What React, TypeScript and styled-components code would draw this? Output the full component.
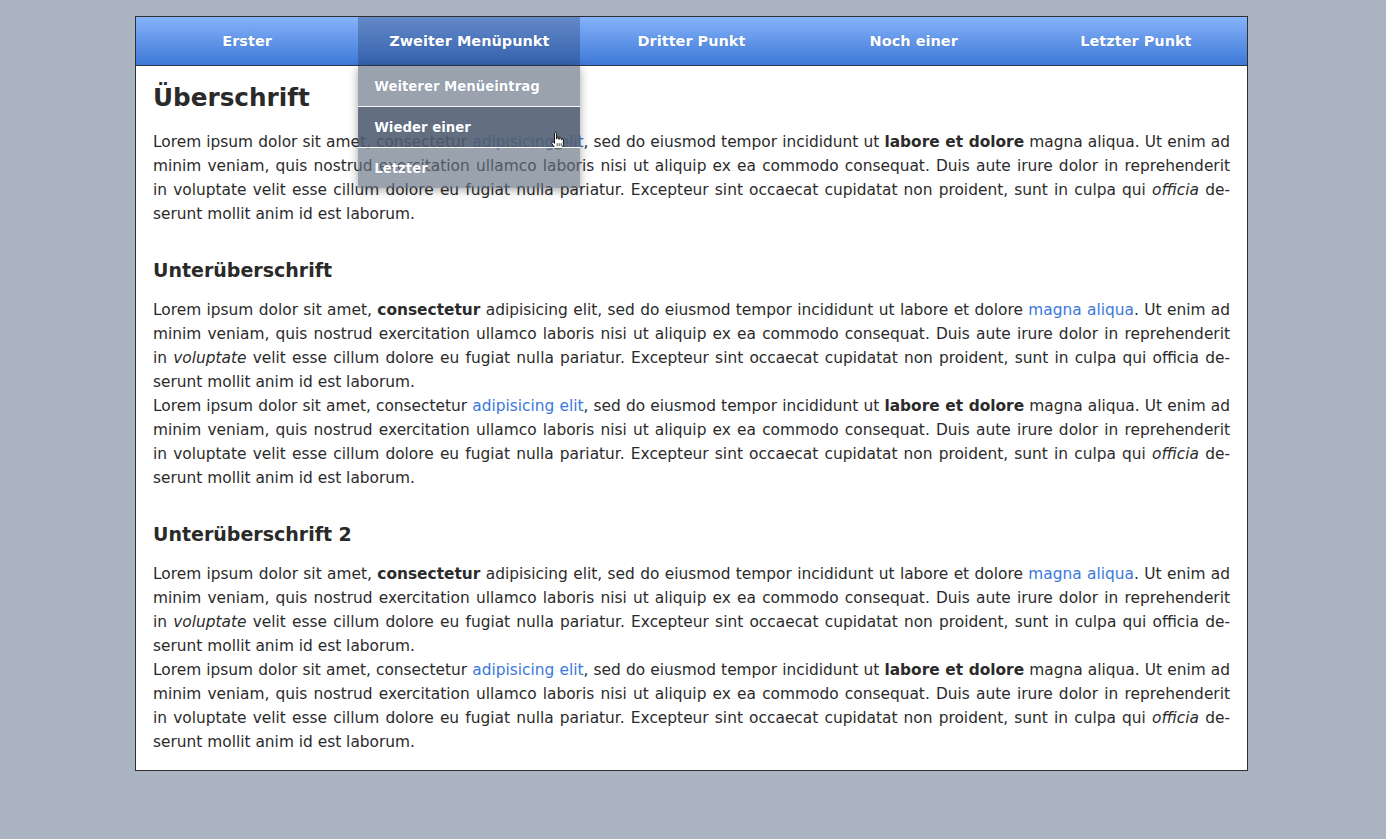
import React from "react";
import styled, { createGlobalStyle } from "styled-components";

const GlobalStyle = createGlobalStyle`
  html, body {
    margin: 0;
    padding: 0;
    background: #aab4c0;
  }
  body {
    font-family: "DejaVu Sans", "Liberation Sans", sans-serif;
    color: #2b2b2b;
  }
`;

const Page = styled.div`
  padding: 16px 3px 40px 0;
`;

const Frame = styled.div`
  width: 1111px;
  margin: 0 auto;
  border: 1px solid #2f2f2f;
  background: #ffffff;
`;

const NavBar = styled.nav`
  position: relative;
  display: flex;
  height: 48px;
  background: linear-gradient(#86b3fb, #3e78d6);
  border-bottom: 1px solid #2f3a4a;
`;

const NavItem = styled.div<{ $active?: boolean }>`
  position: relative;
  flex: 1 1 0;
  display: flex;
  align-items: center;
  justify-content: center;
  font-family: "DejaVu Sans", sans-serif;
  font-weight: bold;
  font-size: 14.5px;
  color: #ffffff;
  text-shadow: 0 0 1px rgba(20, 50, 110, 0.35);
  background: ${(p) => (p.$active ? "linear-gradient(#6489c8, #3461ad)" : "transparent")};
`;

const Dropdown = styled.ul`
  position: absolute;
  top: 49px;
  left: 0;
  right: 0;
  margin: 0;
  padding: 0;
  list-style: none;
  z-index: 5;
  box-shadow: 0 2px 9px rgba(0, 0, 0, 0.35);
`;

const DropItem = styled.li<{ $hover?: boolean; $divider?: boolean }>`
  position: relative;
  height: 40px;
  display: flex;
  align-items: center;
  padding-left: 16px;
  font-family: "DejaVu Sans", sans-serif;
  font-weight: bold;
  font-size: 13.3px;
  color: #ffffff;
  background: ${(p) => (p.$hover ? "rgba(80, 92, 112, 0.89)" : "rgba(100, 112, 130, 0.65)")};
  border-top: ${(p) => (p.$divider ? "1px solid rgba(255,255,255,0.95)" : "none")};
`;

const Cursor = styled.svg`
  position: absolute;
  left: 192px;
  top: 24px;
  width: 15px;
  height: 19px;
`;

const Content = styled.main`
  padding: 16px 17px 16px;
`;

const Title = styled.h1`
  margin: 0 0 16px;
  font-size: 24.7px;
  line-height: 32px;
  font-weight: bold;
  color: #2a2a2a;
`;

const SubTitle = styled.h2`
  margin: 30px 0 14px;
  font-size: 19px;
  line-height: 28px;
  font-weight: bold;
  color: #2a2a2a;
`;

const Para = styled.p`
  margin: 0;
  font-size: 15.4px;
  line-height: 24px;
`;

const Line = styled.span<{ $last?: boolean }>`
  display: block;
  text-align: justify;
  text-align-last: ${(p) => (p.$last ? "left" : "justify")};
`;

const Link = styled.a`
  color: #3a78dc;
  text-decoration: none;
`;

const Strong = styled.strong`
  font-weight: bold;
`;

const Em = styled.em`
  font-style: italic;
`;

const LineTwo = () => (
  <Line>
    minim veniam, quis nostrud exercitation ullamco laboris nisi ut aliquip ex ea commodo consequat. Duis aute irure dolor in reprehenderit
  </Line>
);

const ParaLinked = () => (
  <Para>
    <Line>
      Lorem ipsum dolor sit amet, consectetur <Link href="#">adipisicing elit</Link>, sed do eiusmod tempor incididunt ut{" "}
      <Strong>labore et dolore</Strong> magna aliqua. Ut enim ad
    </Line>
    <LineTwo />
    <Line>
      in voluptate velit esse cillum dolore eu fugiat nulla pariatur. Excepteur sint occaecat cupidatat non proident, sunt in culpa qui{" "}
      <Em>officia</Em> de-
    </Line>
    <Line $last>serunt mollit anim id est laborum.</Line>
  </Para>
);

const ParaBold = () => (
  <Para>
    <Line>
      Lorem ipsum dolor sit amet, <Strong>consectetur</Strong> adipisicing elit, sed do eiusmod tempor incididunt ut labore et dolore{" "}
      <Link href="#">magna aliqua</Link>. Ut enim ad
    </Line>
    <LineTwo />
    <Line>
      in <Em>voluptate</Em> velit esse cillum dolore eu fugiat nulla pariatur. Excepteur sint occaecat cupidatat non proident, sunt in culpa qui officia de-
    </Line>
    <Line $last>serunt mollit anim id est laborum.</Line>
  </Para>
);

const navItems = ["Erster", "Zweiter Menüpunkt", "Dritter Punkt", "Noch einer", "Letzter Punkt"];

export default function App() {
  return (
    <>
      <GlobalStyle />
      <Page>
        <Frame>
          <NavBar>
            {navItems.map((label, i) => (
              <NavItem key={label} $active={i === 1}>
                {label}
                {i === 1 && (
                  <Dropdown>
                    <DropItem>Weiterer Menüeintrag</DropItem>
                    <DropItem $hover $divider>
                      Wieder einer
                      <Cursor viewBox="0 0 15 19">
                        <path
                          d="M4.5 2.2c0-1.3 2.1-1.3 2.1 0V8h.3V6.8c0-1.2 2-1.2 2 0V8.3h.3V7.6c0-1.2 2-1.2 2 0v1.1h.3c0-1.1 1.9-1.1 1.9 0v4.3c0 2.1-1.2 3.9-2.6 4.8H5.7c-.8-.9-2.8-3.7-3.8-5.1-.7-1.1.6-2.200 1.5-1.4l1.1 1.1V2.2z"
                          fill="#ffffff"
                          stroke="#000000"
                          strokeWidth="0.9"
                          strokeLinejoin="round"
                        />
                        <path d="M7.2 12.2v3M9.2 12.2v3M11.2 12.2v3" stroke="#000000" strokeWidth="0.7" />
                      </Cursor>
                    </DropItem>
                    <DropItem $divider>Letzter</DropItem>
                  </Dropdown>
                )}
              </NavItem>
            ))}
          </NavBar>
          <Content>
            <Title>Überschrift</Title>
            <ParaLinked />
            <SubTitle>Unterüberschrift</SubTitle>
            <ParaBold />
            <ParaLinked />
            <SubTitle>Unterüberschrift 2</SubTitle>
            <ParaBold />
            <ParaLinked />
          </Content>
        </Frame>
      </Page>
    </>
  );
}
